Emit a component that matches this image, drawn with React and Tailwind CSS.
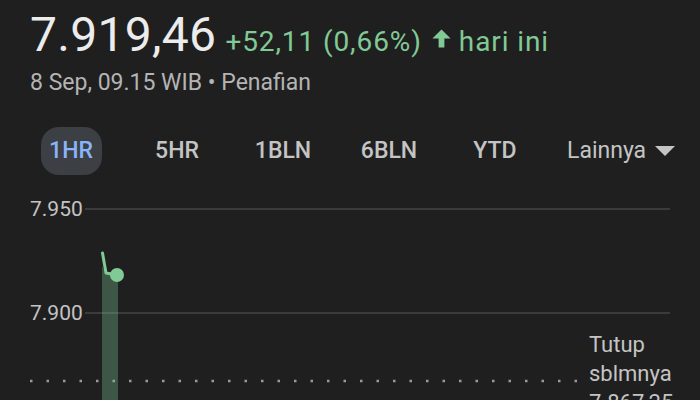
import React from 'react';

const tabs = ['1HR', '5HR', '1BLN', '6BLN', 'YTD'];

export default function App() {
  return (
    <div className="w-[700px] h-[400px] overflow-hidden bg-[#1f1f1f] text-[#e3e3e3]" style={{ fontFamily: 'Roboto, "Open Sans", sans-serif' }}>
      {/* Price header */}
      <div className="pl-[30px] pt-[11px]">
        <div className="flex items-baseline">
          <span className="text-[48px] leading-none text-[#ececec] tracking-[0.3px]">7.919,46</span>
          <span className="ml-[9px] text-[28px] leading-none text-[#81c995] tracking-[0.9px]">+52,11 (0,66%)</span>
          <svg className="ml-[8px] self-center mt-[6px]" width="23" height="23" viewBox="0 0 24 24" fill="#81c995">
            <path d="M12 2.5l9.5 9.5h-6.5v9.5h-6v-9.5H2.5z" />
          </svg>
          <span className="ml-[6px] text-[28px] leading-none text-[#81c995] tracking-[0.9px]">hari ini</span>
        </div>
        <div className="mt-[12px] text-[23px] leading-none text-[#b4b4b4]">8 Sep, 09.15 WIB • Penafian</div>
      </div>

      {/* Range tabs */}
      <div className="mt-[33px] flex items-center pl-[18px] h-[48px]">
        {tabs.map((t, i) => (
          <div key={t} className="w-[106px] flex justify-center">
            <div
              className={
                i === 0
                  ? 'h-[48px] w-[61px] flex items-center justify-center rounded-[18px] bg-[#3c3f43] text-[#8ab4f8] text-[23px] font-medium'
                  : 'h-[48px] flex items-center text-[23px] font-medium text-[#c4c4c4]'
              }
            >
              {t}
            </div>
          </div>
        ))}
        <div className="ml-[19px] flex items-center text-[23px] text-[#c4c4c4]">
          Lainnya
          <svg className="ml-[8px]" width="22" height="12" viewBox="0 0 22 12" fill="#c4c4c4">
            <path d="M1 1h20l-10 10z" />
          </svg>
        </div>
      </div>

      {/* Chart */}
      <div className="relative mt-[23px] pl-[30px]">
        <div className="flex items-center h-[22px]">
          <span className="text-[21px] text-[#c4c4c4] leading-none w-[55px]">7.950</span>
          <div className="w-[585px] h-[2px] bg-[#3b3b3b]" />
        </div>
        <div className="h-[82px]" />
        <div className="flex items-center h-[22px]">
          <span className="text-[21px] text-[#c4c4c4] leading-none w-[55px]">7.900</span>
          <div className="w-[585px] h-[2px] bg-[#3b3b3b]" />
        </div>
        <div className="flex">
          <svg className="mt-[55px]" width="559" height="4" viewBox="0 0 559 4">
            <line x1="0" y1="2" x2="559" y2="2" stroke="#9a9a9a" strokeWidth="2.5" strokeDasharray="2.5 14" />
          </svg>
          <div className="mt-[6px] text-[22px] leading-[29px] text-[#c4c4c4]">
            Tutup
            <br />
            sblmnya
            <br />
            7.867,25
          </div>
        </div>

        <svg className="absolute left-0 top-0" width="700" height="210" viewBox="0 0 700 210">
          <path d="M102 68 L106 76 L118 79 L118 210 L102 210 Z" fill="#81c995" opacity="0.32" />
          <path d="M102.5 55 L106 75 L117 77" stroke="#81c995" strokeWidth="3" fill="none" strokeLinejoin="round" strokeLinecap="round" />
          <circle cx="117" cy="77" r="7" fill="#81c995" />
        </svg>
      </div>
    </div>
  );
}
